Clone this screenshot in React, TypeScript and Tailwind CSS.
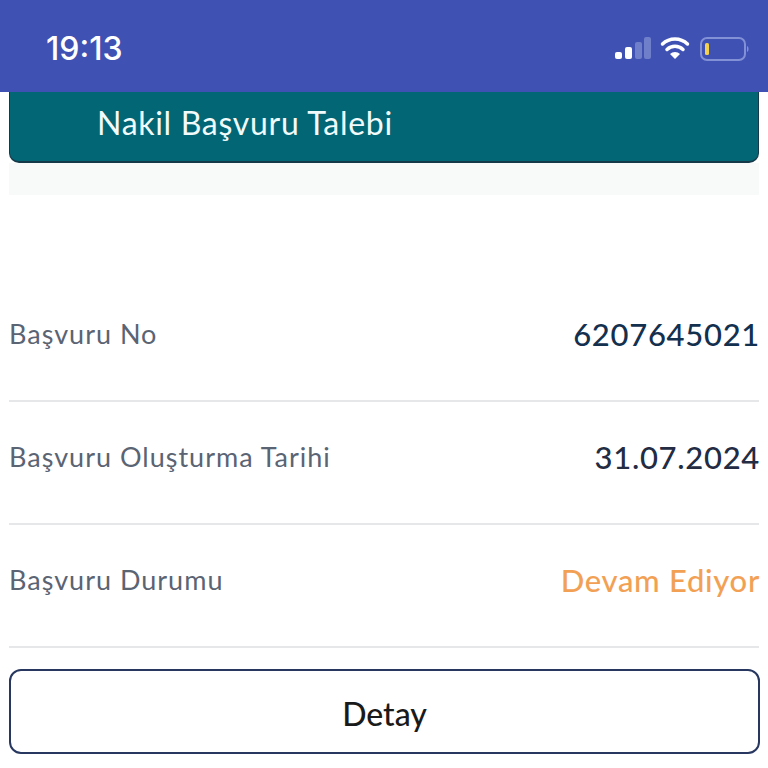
import React from 'react';

const rows = [
  { label: 'Başvuru No', value: '6207645021', color: 'text-[#14304f]' },
  { label: 'Başvuru Oluşturma Tarihi', value: '31.07.2024', color: 'text-[#232c43]' },
  { label: 'Başvuru Durumu', value: 'Devam Ediyor', color: 'text-[#f2a154]' },
];

function StatusIcons() {
  return (
    <svg width="134" height="28" viewBox="0 0 134 28" fill="none">
      {/* signal */}
      <rect x="0" y="17" width="7" height="7" rx="2" fill="#fff" />
      <rect x="10" y="12" width="7" height="12" rx="2" fill="#fff" />
      <rect x="20" y="7" width="7" height="17" rx="2" fill="#6f7fc9" />
      <rect x="29" y="2" width="7" height="22" rx="2" fill="#6f7fc9" />
      {/* wifi */}
      <path d="M47.500 9a18 18 0 0 1 25 0" stroke="#fff" strokeWidth="3.500" strokeLinecap="round" />
      <path d="M52 14.500a11.500 11.500 0 0 1 16 0" stroke="#fff" strokeWidth="3.500" strokeLinecap="round" />
      <path d="M60 24l-5-5a7 7 0 0 1 10 0z" fill="#fff" />
      {/* battery */}
      <rect x="86" y="3" width="44" height="22" rx="6" stroke="#8290d6" strokeWidth="2" />
      <rect x="90" y="8" width="4" height="12" rx="1.500" fill="#f3d04e" />
      <path d="M132 11c2 .5 2 5.500 0 6z" fill="#8290d6" />
    </svg>
  );
}

export default function App() {
  return (
    <div className="w-[768px] h-[768px] overflow-hidden bg-white font-['Lato','Noto_Sans',sans-serif]">
      {/* Status bar */}
      <div className="h-[92px] bg-[#3f51b3] pl-[46px] pr-[19px] pt-[6px] flex items-center justify-between">
        <span className="text-[32px] font-medium text-white font-['Inter',sans-serif]">19:13</span>
        <StatusIcons />
      </div>

      {/* Title card */}
      <div className="mx-[9px] h-[71px] bg-[#026675] border-b-2 border-x border-[#16394a] rounded-b-[10px] pl-[87px] pb-[8px] flex items-center">
        <span className="text-[32px] tracking-[0.7px] text-[#f2fbfb]">Nakil Başvuru Talebi</span>
      </div>
      <div className="mx-[9px] h-[32px] bg-[#f8f9f9]" />

      {/* Details */}
      <div className="mx-[9px] mt-[84px] flex flex-col">
        {rows.map((row) => (
          <div
            key={row.label}
            className="h-[123px] border-b-2 border-[#e6e7e9] flex items-center justify-between pb-[10px] box-border"
          >
            <span className="text-[27px] tracking-[1px] text-[#5a6473]">{row.label}</span>
            <span className={`text-[31px] tracking-[0.7px] font-medium -mr-[1px] ${row.color}`}>{row.value}</span>
          </div>
        ))}
      </div>

      <button className="mx-[9px] mt-[21px] w-[751px] h-[85px] pt-[5px] border-2 border-[#27375f] rounded-[12px] bg-white text-[32px] font-medium text-[#1a1a1a]">
        Detay
      </button>
    </div>
  );
}
